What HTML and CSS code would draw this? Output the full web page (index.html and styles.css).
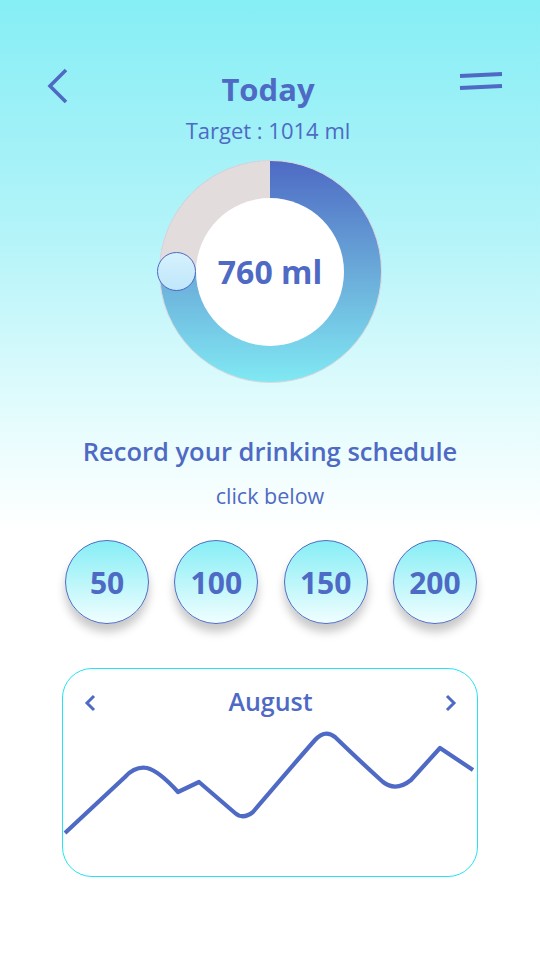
FILE: index.html
```html
<!DOCTYPE html>
<html lang="en">
<head>
<meta charset="utf-8">
<title>Today</title>
<link rel="stylesheet" href="styles.css">
</head>
<body>
<div class="hero">
  <header class="topbar">
    <svg class="back" width="24" height="38" viewBox="0 0 24 38">
      <polyline points="19,2 3,18 19,34" fill="none" stroke="#4e6ac4" stroke-width="3.6" stroke-linecap="butt" stroke-linejoin="miter"/>
    </svg>
    <div class="titles">
      <h1 class="title">Today</h1>
      <p class="target">Target : 1014 ml</p>
    </div>
    <svg class="menu" width="46" height="22" viewBox="0 0 46 22">
      <line x1="2" y1="6" x2="44" y2="4" stroke="#4e6ac4" stroke-width="4.2"/>
      <line x1="2" y1="18" x2="44" y2="16" stroke="#4e6ac4" stroke-width="4.2"/>
    </svg>
  </header>

  <div class="ring">
    <div class="ring-inner">760 ml</div>
    <span class="knob"></span>
  </div>

  <h2 class="record">Record your drinking schedule</h2>
  <p class="hint">click below</p>
</div>

<div class="amounts">
  <button class="amount">50</button>
  <button class="amount">100</button>
  <button class="amount">150</button>
  <button class="amount">200</button>
</div>

<section class="chart-card">
  <div class="chart-head">
    <svg class="chev" width="14" height="20" viewBox="0 0 14 20">
      <polyline points="10,3 3,10 10,17" fill="none" stroke="#4e6ac4" stroke-width="3"/>
    </svg>
    <h3 class="month">August</h3>
    <svg class="chev" width="14" height="20" viewBox="0 0 14 20">
      <polyline points="4,3 11,10 4,17" fill="none" stroke="#4e6ac4" stroke-width="3"/>
    </svg>
  </div>
  <svg class="chart" width="414" height="130" viewBox="0 0 414 130">
    <path d="M2 113 L62 57 Q72 46 84 48 Q96 51 115 72 L136 62 L172 93 Q180 100 190 92 Q230 45 252 20 Q262 9 272 17 Q300 44 320 62 Q333 72 348 60 L377 28 L410 50" fill="none" stroke="#4e6ac4" stroke-width="4.2" stroke-linejoin="round"/>
  </svg>
</section>
</body>
</html>
```

FILE: styles.css
```css
* { box-sizing: border-box; }

body {
  margin: 0;
  width: 540px;
  min-height: 960px;
  background: #ffffff;
  font-family: "Open Sans", "Noto Sans", sans-serif;
  color: #4e6ac4;
}

.hero {
  height: 530px;
  padding-top: 68px;
  background: linear-gradient(180deg, #86eef5 0%, #b4f4f9 45%, #e6fcfd 80%, #ffffff 100%);
  display: flex;
  flex-direction: column;
  align-items: center;
}

.topbar {
  width: 100%;
  display: grid;
  grid-template-columns: 1fr auto 1fr;
  padding: 0 38px;
}

.back { justify-self: start; display: block; margin-left: 9px; }
.menu { justify-self: end; display: block; margin-top: 2px; margin-right: -2px; }

.titles {
  display: flex;
  flex-direction: column;
  align-items: center;
  transform: translateX(-2px);
}

.title {
  margin: 0;
  font-size: 31px;
  line-height: 42px;
  font-weight: 700;
}

.target {
  margin: 5px 0 0;
  font-size: 22px;
  line-height: 30px;
  font-weight: 400;
}

.ring {
  position: relative;
  margin-top: 15px;
  width: 223px;
  height: 223px;
  border-radius: 50%;
  border: 1px solid #d9d6dc;
  background:
    conic-gradient(transparent 0 75%, #e3dcdd 75% 100%),
    linear-gradient(180deg, #4e6ac4 0%, #6aaad9 50%, #80e9f3 100%);
  display: flex;
  align-items: center;
  justify-content: center;
}

.ring-inner {
  width: 148px;
  height: 148px;
  border-radius: 50%;
  background: #ffffff;
  display: flex;
  align-items: center;
  justify-content: center;
  font-size: 32px;
  font-weight: 700;
}

.knob {
  position: absolute;
  left: -3px;
  top: 91px;
  width: 39px;
  height: 39px;
  border-radius: 50%;
  border: 1.5px solid #4e6ac4;
  background: linear-gradient(180deg, #d6f1fd 0%, #bfe7fb 100%);
}

.record {
  margin: 51px 0 0;
  font-size: 25.5px;
  line-height: 34px;
  font-weight: 600;
}

.hint {
  margin: 13px 0 0;
  font-size: 21.5px;
  line-height: 30px;
  font-weight: 400;
}

.amounts {
  margin-top: 10px;
  display: flex;
  justify-content: center;
  gap: 25.3px;
  padding-left: 2px;
}

.amount {
  width: 84px;
  height: 84px;
  border-radius: 50%;
  border: 1.5px solid #4e6ac4;
  background: linear-gradient(180deg, #86eef5 0%, #f0feff 100%);
  box-shadow: 0 8px 10px rgba(0, 0, 0, 0.22);
  font-family: inherit;
  color: #4e6ac4;
  font-size: 30px;
  font-weight: 700;
  padding: 0;
}

.chart-card {
  margin: 44px auto 0;
  width: 416px;
  height: 209px;
  border: 1.5px solid #22e4f2;
  border-radius: 30px;
  overflow: hidden;
}

.chart-head {
  display: flex;
  align-items: center;
  justify-content: space-between;
  padding: 12px 20px 0 21px;
  height: 51px;
}

.chev { display: block; margin-top: 4px; }

.month {
  margin: 0;
  font-size: 25px;
  line-height: 34px;
  font-weight: 600;
}

.chart { display: block; }
```
